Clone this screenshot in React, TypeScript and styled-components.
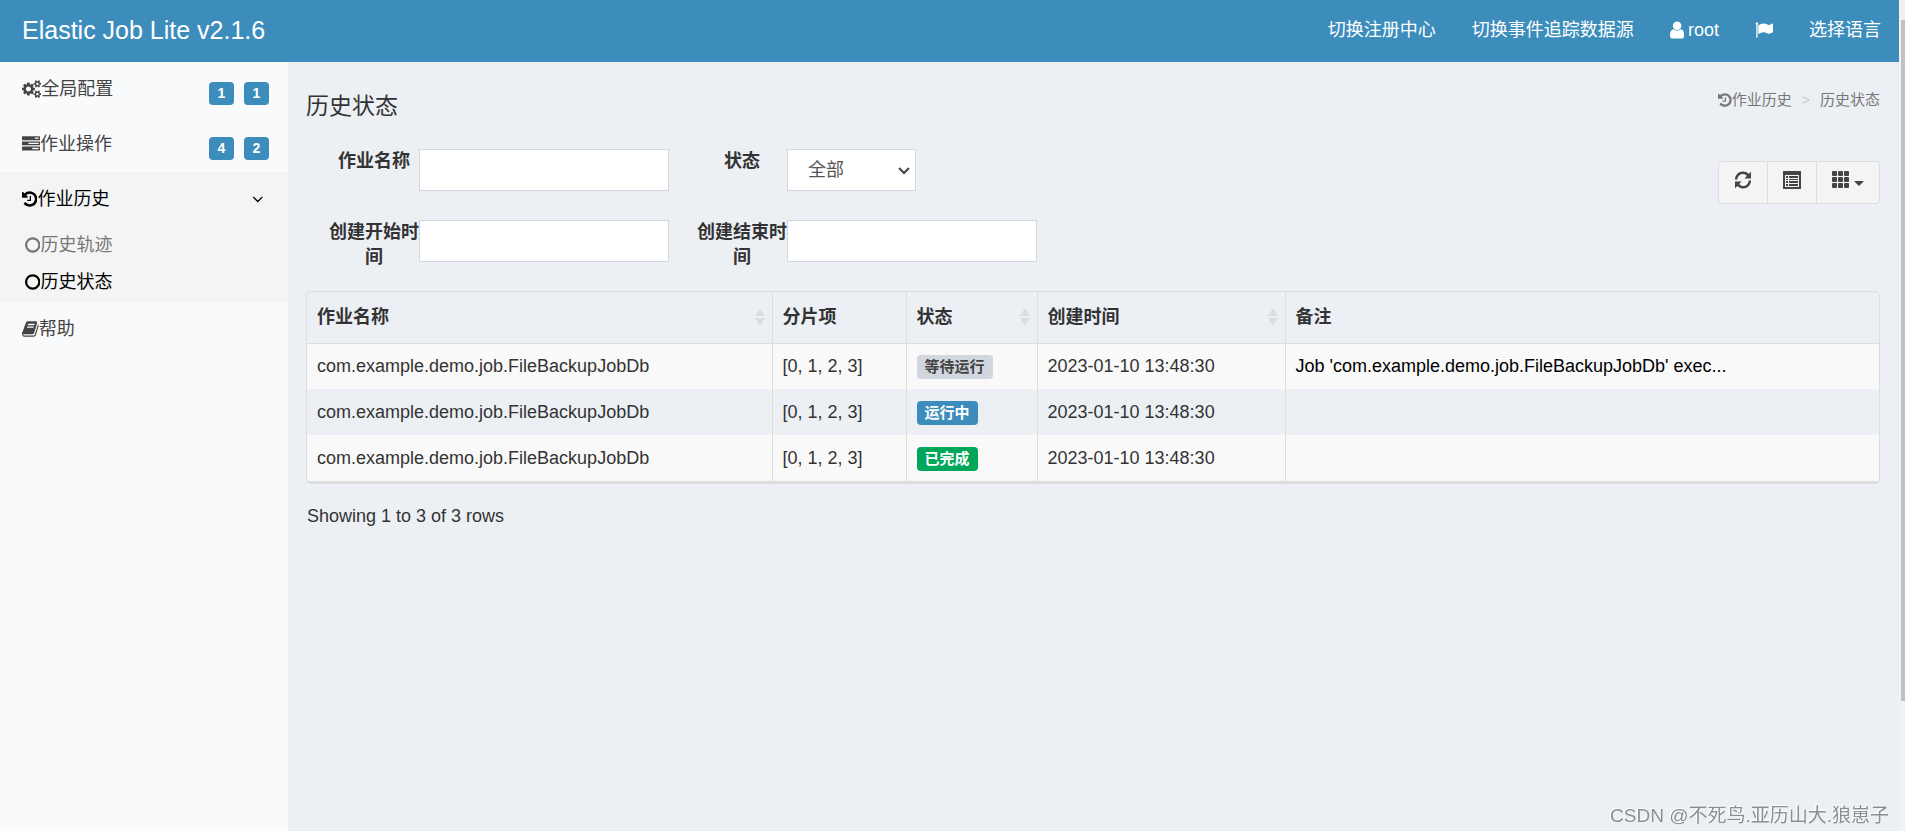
import React from "react";
import styled, { createGlobalStyle, css } from "styled-components";

const GlobalStyle = createGlobalStyle`
  *, *::before, *::after { box-sizing: border-box; }
  html, body { margin: 0; padding: 0; }
  body {
    background: #ffffff;
    color: #333333;
    font-family: "Liberation Sans", "Noto Sans CJK SC", sans-serif;
    font-size: 18px;
    line-height: 25px;
  }
  a { color: inherit; text-decoration: none; }
  button, input, select { font-family: inherit; font-size: inherit; }
  ul, ol { list-style: none; margin: 0; padding: 0; }
`;

/* ---------- icons ---------- */

const Glyph = styled.svg<{ $h?: number }>`
  height: ${(p) => p.$h ?? 18}px;
  width: auto;
  flex: none;
  display: block;
  fill: currentColor;
  fill-rule: evenodd;
`;

const smallCog = (dy: number) =>
  `M1920 ${198 + dy}v-140q0 -16 -149 -31q-12 -27 -30 -52q51 -113 51 -138q0 -4 -4 -7q-122 -71 -124 -71q-8 0 -46 47t-52 68q-20 -2 -30 -2t-30 2q-14 -21 -52 -68t-46 -47q-2 0 -124 71q-4 3 -4 7q0 25 51 138q-18 25 -30 52q-149 15 -149 31v140q0 16 149 31q13 29 30 52q-51 113 -51 138q0 4 4 7q4 2 35 20t59 34t30 16q8 0 46 -46.5t52 -67.5q20 2 30 2t30 -2q51 71 92 112l6 2q4 0 124 -70q4 -3 4 -7q0 -25 -51 -138q17 -23 30 -52q149 -15 149 -31z`;

const ICONS = {
  cogs: {
    w: 1920,
    d:
      "M896 640q0 106 -75 181t-181 75t-181 -75t-75 -181t75 -181t181 -75t181 75t75 181zM1664 128q0 52 -38 90t-90 38t-90 -38t-38 -90q0 -53 37.5 -90.5t90.5 -37.5t90.5 37.5t37.5 90.5zM1664 1152q0 52 -38 90t-90 38t-90 -38t-38 -90q0 -53 37.5 -90.5t90.5 -37.5t90.5 37.5t37.5 90.5zM1280 731v-185q0 -10 -7 -19.5t-16 -10.5l-155 -24q-11 -35 -32 -76q34 -48 90 -115q7 -11 7 -20q0 -12 -7 -19q-23 -30 -82.5 -89.5t-78.5 -59.5q-11 0 -21 7l-115 90q-37 -19 -77 -31q-11 -108 -23 -155q-7 -24 -30 -24h-186q-11 0 -20 7.5t-10 17.5l-23 153q-34 10 -75 31l-118 -89q-7 -7 -20 -7q-11 0 -21 8q-144 133 -144 160q0 9 7 19q10 14 41 53t47 61q-23 44 -35 82l-152 24q-10 1 -17 9.5t-7 19.5v185q0 10 7 19.5t16 10.5l155 24q11 35 32 76q-34 48 -90 115q-7 11 -7 20q0 12 7 20q22 30 82 89t79 59q11 0 21 -7l115 -90q34 18 77 32q11 108 23 154q7 24 30 24h186q11 0 20 -7.5t10 -17.5l23 -153q34 -10 75 -31l118 89q8 7 20 7q11 0 21 -8q144 -133 144 -160q0 -8 -7 -19q-12 -16 -42 -54t-45 -60q23 -48 34 -82l152 -23q10 -2 17 -10.5t7 -19.5z" +
      smallCog(0) +
      smallCog(1024),
  },
  tasks: {
    w: 1792,
    d: "M1024 128h640v128h-640v-128zM640 640h1024v128h-1024v-128zM1280 1152h384v128h-384v-128zM1792 320v-256q0 -26 -19 -45t-45 -19h-1664q-26 0 -45 19t-19 45v256q0 26 19 45t45 19h1664q26 0 45 -19t19 -45zM1792 832v-256q0 -26 -19 -45t-45 -19h-1664q-26 0 -45 19t-19 45v256q0 26 19 45t45 19h1664q26 0 45 -19t19 -45zM1792 1344v-256q0 -26 -19 -45t-45 -19h-1664q-26 0 -45 19t-19 45v256q0 26 19 45t45 19h1664q26 0 45 -19t19 -45z",
  },
  history: {
    w: 1536,
    d: "M1536 640q0 -156 -61 -298t-164 -245t-245 -164t-298 -61q-172 0 -327 72.5t-264 204.5q-7 10 -6.5 22.5t8.5 20.5l137 138q10 9 25 9q16 -2 23 -12q73 -95 179 -147t225 -52q104 0 198.5 40.5t163.5 109.5t109.5 163.5t40.5 198.5t-40.5 198.5t-109.5 163.5t-163.5 109.5t-198.5 40.5q-98 0 -188 -35.5t-160 -101.5l137 -138q31 -30 14 -69q-17 -40 -59 -40h-448q-26 0 -45 19t-19 45v448q0 42 40 59q39 17 69 -14l130 -129q107 101 244.5 156.5t284.5 55.5q156 0 298 -61t245 -164t164 -245t61 -298zM896 928v-448q0 -14 -9 -23t-23 -9h-320q-14 0 -23 9t-9 23v64q0 14 9 23t23 9h224v352q0 14 9 23t23 9h64q14 0 23 -9t9 -23z",
  },
  circle: {
    w: 1536,
    d: "M768 1184q-148 0 -273 -73t-198 -198t-73 -273t73 -273t198 -198t273 -73t273 73t198 198t73 273t-73 273t-198 198t-273 73zM1536 640q0 -209 -103 -385.5t-279.5 -279.5t-385.5 -103t-385.5 103t-279.5 279.5t-103 385.5t103 385.5t279.5 279.5t385.5 103t385.5 -103t279.5 -279.5t103 -385.5z",
  },
  book: {
    w: 1664,
    d: "M1639 1058q40 -57 18 -129l-275 -906q-19 -64 -76.5 -107.5t-122.5 -43.5h-923q-77 0 -148.5 53.5t-99.5 131.5q-24 67 -2 127q0 4 3 27t4 37q1 8 -3 21.5t-3 19.5q2 11 8 21t16.5 23.5t16.5 23.5q23 38 45 91.5t30 91.5q3 10 0.5 30t-0.5 28q3 11 17 28t17 23q21 36 42 92t25 90q1 9 -2.5 32t0.5 28q4 13 22 30.5t22 22.5q19 26 42.5 84.5t27.5 96.5q1 8 -3 25.5t-2 26.5q2 8 9 18t18 23t17 21q8 12 16.5 30.5t15 35t16 36t19.5 32t26.5 23.5t36 11.5t47.5 -5.5l-1 -3q38 9 51 9h761q74 0 114 -56t18 -130l-274 -906q-36 -119 -71.5 -153.5t-128.5 -34.5h-869q-27 0 -38 -15q-11 -16 -1 -43q24 -70 144 -70h923q29 0 56 15.5t35 41.5l300 987q7 22 5 57q38 -15 59 -43zM575 1056q-4 -13 2 -22.5t20 -9.5h608q13 0 25.5 9.5t16.5 22.5l21 64q4 13 -2 22.5t-20 9.5h-608q-13 0 -25.5 -9.5t-16.5 -22.5zM492 800q-4 -13 2 -22.5t20 -9.5h608q13 0 25.5 9.5t16.5 22.5l21 64q4 13 -2 22.5t-20 9.5h-608q-13 0 -25.5 -9.5t-16.5 -22.5z",
  },
  user: {
    w: 1280,
    d: "M1280 137q0 -109 -62.5 -187t-150.5 -78h-854q-88 0 -150.5 78t-62.5 187q0 85 8.5 160.5t31.5 152t58.5 131t94 89t134.5 34.5q131 -128 313 -128t313 128q76 0 134.5 -34.5t94 -89t58.5 -131t31.5 -152t8.5 -160.5zM1024 1024q0 -159 -112.5 -271.5t-271.5 -112.5t-271.5 112.5t-112.5 271.5t112.5 271.5t271.5 112.5t271.5 -112.5t112.5 -271.5z",
  },
  flag: {
    w: 1792,
    d: "M320 1280q0 -72 -64 -110v-1266q0 -13 -9.5 -22.5t-22.5 -9.5h-64q-13 0 -22.5 9.5t-9.5 22.5v1266q-64 38 -64 110q0 53 37.5 90.5t90.5 37.5t90.5 -37.5t37.5 -90.5zM1792 1216v-763q0 -25 -12.5 -38.5t-39.5 -27.5q-215 -116 -369 -116q-61 0 -123.5 22t-108.5 48t-115.5 48t-142.5 22q-192 0 -464 -146q-17 -9 -33 -9q-26 0 -45 19t-19 45v742q0 32 31 55q21 14 79 43q236 120 421 120q107 0 200 -29t219 -88q38 -19 88 -19q54 0 117.5 21t110 47t88 47t54.5 21q26 0 45 -19t19 -45z",
  },
  down: {
    w: 1152,
    d: "M1075 800q0 -13 -10 -23l-466 -466q-10 -10 -23 -10t-23 10l-466 466q-10 10 -10 23t10 23l50 50q10 10 23 10t23 -10l393 -393l393 393q10 10 23 10t23 -10l50 -50q10 -10 10 -23z",
  },
};

type IconName = keyof typeof ICONS;

const Icon = ({ name, h }: { name: IconName; h?: number }) => (
  <Glyph $h={h} viewBox={`0 0 ${ICONS[name].w} 1792`} aria-hidden="true">
    <path transform="translate(0 1536) scale(1 -1)" d={ICONS[name].d} />
  </Glyph>
);

const RefreshIcon = () => (
  <Glyph viewBox="0 0 18 18" aria-hidden="true">
    <path d="M1 8.600C1 4 4.600 .6 9 .6c2.200 0 4.200 .8 5.600 2.300L17 .8v6.700h-6.600l2.400-2.600C11.800 3.700 10.500 3 9 3 5.900 3 3.500 5.300 3.300 8.600z" />
    <path d="M17 9.400c0 4.600-3.600 8-8 8-2.200 0-4.200-.8-5.600-2.300L1 17.200v-6.700h6.600l-2.400 2.600c1 1.200 2.300 1.900 3.800 1.900 3.100 0 5.500-2.300 5.700-5.600z" />
  </Glyph>
);

const ListIcon = () => (
  <Glyph viewBox="0 0 18 18" aria-hidden="true">
    <path d="M0 0h18v18H0zM2 4v12h14V4z" />
    <path d="M3 5h2v2H3zM6 5h9v2H6zM3 8h2v1H3zM6 8h9v1H6zM3 10h2v2H3zM6 10h9v2H6zM3 13h2v2H3zM6 13h9v2H6z" />
  </Glyph>
);

const GridIcon = () => (
  <Glyph viewBox="0 0 18 18" aria-hidden="true">
    {[0, 6, 12].map((y) =>
      [0, 6, 12].map((x) => <rect key={`${x}-${y}`} x={x} y={y} width="5" height="5" rx="1" />)
    )}
  </Glyph>
);

/* ---------- page frame ---------- */

const Page = styled.div`
  display: flex;
  height: 100vh;
  overflow: hidden;
  padding-bottom: 4px;
`;

const Main = styled.div`
  flex: 1;
  min-width: 0;
  display: flex;
  flex-direction: column;
`;

const ScrollTrack = styled.div`
  flex: none;
  width: 6px;
  padding: 20px 0 0 2px;
  background: #f1f1f1;
`;

const ScrollThumb = styled.div`
  height: 84%;
  background: #c1c1c1;
`;

const Header = styled.header`
  display: flex;
  align-items: center;
  justify-content: space-between;
  height: 62px;
  padding: 0 18px 2px 22px;
  background: #3c8dbc;
  color: #ffffff;
`;

const Brand = styled.a`
  font-size: 25px;
  line-height: 60px;
`;

const TopNav = styled.nav`
  display: flex;
  gap: 36px;
`;

const TopLink = styled.a`
  display: flex;
  align-items: center;
  gap: 4px;
`;

const Body = styled.div`
  flex: 1;
  display: flex;
`;

/* ---------- sidebar ---------- */

const Sidebar = styled.aside`
  flex: none;
  width: 288px;
  background: #f9fafc;

  ${Glyph} { margin-bottom: 2px; }
`;

const MenuItem = styled.li<{ $active?: boolean }>`
  background: ${(p) => (p.$active ? "#f4f4f5" : "transparent")};
`;

const MenuLink = styled.a<{ $active?: boolean }>`
  display: flex;
  align-items: center;
  height: 55px;
  padding: 0 19px 0 22px;
  color: ${(p) => (p.$active ? "#000000" : "#444444")};
`;

const Badges = styled.span`
  display: flex;
  gap: 10px;
  margin-left: auto;
  padding-top: 8px;
`;

const Chevron = styled.span`
  margin: 0 5px 0 auto;
`;

const labelBase = css`
  display: inline-block;
  border-radius: 4px;
  font-weight: bold;
  text-align: center;
`;

const CountBadge = styled.span`
  ${labelBase}
  min-width: 25px;
  height: 23px;
  font-size: 14px;
  line-height: 23px;
  background: #3c8dbc;
  color: #ffffff;
`;

const SubMenu = styled.ul`
  padding-bottom: 1px;
`;

const SubLink = styled.a<{ $active?: boolean }>`
  display: flex;
  align-items: center;
  height: 37px;
  padding-left: 25px;
  color: ${(p) => (p.$active ? "#000000" : "#777777")};
`;

/* ---------- content ---------- */

const Content = styled.main`
  flex: 1;
  min-width: 0;
  padding: 0 19px 0 18px;
  background: #ecf0f5;
`;

const TitleRow = styled.div`
  display: flex;
  justify-content: space-between;
  align-items: flex-start;
  padding-top: 24px;
`;

const Title = styled.h1`
  margin: 0;
  font-size: 23px;
  line-height: 40px;
  font-weight: normal;
`;

const Crumbs = styled.ol`
  display: flex;
  color: #777777;
  font-size: 15px;
  line-height: 28px;
`;

const Crumb = styled.li`
  & + &::before {
    content: ">";
    padding: 0 10px;
    color: #cccccc;
    font-size: 14px;
  }
`;

const CrumbLink = styled.a`
  display: inline-flex;
  align-items: center;
`;

const FilterRow = styled.div`
  display: flex;
  justify-content: space-between;
  align-items: flex-start;
  margin-top: 23px;
`;

const Filters = styled.form`
  display: grid;
  grid-template-columns: 353px 353px;
  column-gap: 15px;
  row-gap: 29px;
  padding-left: 10px;
`;

const Field = styled.div`
  display: flex;
`;

const FieldLabel = styled.label`
  width: 103px;
  padding-left: 13px;
  font-weight: bold;
  text-align: center;
  word-break: break-all;
`;

const control = css`
  height: 42px;
  border: 1px solid #d2d6de;
  border-radius: 0;
  background: #ffffff;
  color: #555555;
`;

const TextBox = styled.input`
  ${control}
  width: 250px;
  padding: 0 15px;
`;

const SelectWrap = styled.span`
  position: relative;
  display: block;
  width: 129px;
  height: 42px;
`;

const Select = styled.select`
  ${control}
  width: 100%;
  padding: 0 20px;
  appearance: none;
`;

const SelectArrow = styled.svg`
  position: absolute;
  right: 6px;
  top: 18px;
  width: 12px;
  height: 8px;
  fill: none;
  stroke: #444444;
  stroke-width: 2;
  pointer-events: none;
`;

const Toolbar = styled.div`
  display: flex;
  margin-top: 12px;
`;

const ToolButton = styled.button`
  display: flex;
  justify-content: center;
  align-items: flex-start;
  gap: 4px;
  height: 43px;
  padding: 9px 15px 0;
  border: 1px solid #dddddd;
  background: #f4f4f4;
  color: #444444;
  & + & { margin-left: -1px; }
  &:first-child { border-radius: 4px 0 0 4px; }
  &:last-child { border-radius: 0 4px 4px 0; }
`;

const Caret = styled.span`
  margin-top: 10px;
  border: 5px solid transparent;
  border-top-color: currentColor;
  border-bottom: 0;
`;

/* ---------- table ---------- */

const TableBox = styled.div`
  margin-top: 21px;
  border: 1px solid #dddddd;
  border-bottom-width: 3px;
  border-radius: 5px;
  overflow: hidden;
`;

const Table = styled.table`
  width: 100%;
  table-layout: fixed;
  border-collapse: collapse;
`;

const Col = styled.col<{ $w?: number }>`
  width: ${(p) => (p.$w ? `${p.$w}px` : "auto")};
`;

const HeadCell = styled.th`
  height: 51px;
  padding: 0 10px;
  border-bottom: 1px solid #dddddd;
  text-align: left;
  & + & { border-left: 1px solid #dddddd; }
`;

const HeadInner = styled.div`
  display: flex;
  align-items: center;
  justify-content: space-between;
  margin-right: -4px;
`;

const SortMark = styled.svg`
  width: 12px;
  height: 20px;
  fill: #dddddd;
`;

const Row = styled.tr`
  background: #ecf0f5;
  &:nth-child(odd) { background: #f9f9f9; }
`;

const Cell = styled.td<{ $dark?: boolean }>`
  height: 46px;
  padding: 0 10px;
  color: ${(p) => (p.$dark ? "#000000" : "inherit")};
  white-space: nowrap;
  & + & { border-left: 1px solid #dddddd; }
`;

type Tone = "wait" | "run" | "done";

const tones: Record<Tone, string> = {
  wait: "background: #d2d6de; color: #444444;",
  run: "background: #3c8dbc; color: #ffffff;",
  done: "background: #00a65a; color: #ffffff;",
};

const StatusLabel = styled.span<{ $tone: Tone }>`
  ${labelBase}
  height: 24px;
  padding: 0 8px;
  font-size: 15px;
  line-height: 24px;
  vertical-align: middle;
  ${(p) => tones[p.$tone]}
`;

const Summary = styled.p`
  margin: 20px 0 0 1px;
`;

const Watermark = styled.div`
  position: fixed;
  right: 16px;
  bottom: 4px;
  font-size: 19px;
  line-height: 30px;
  color: #8c8e92;
  text-shadow: -1px -1px 0 #ffffff;
`;

const columns: { label: string; width?: number; sortable?: boolean }[] = [
  { label: "作业名称", width: 465, sortable: true },
  { label: "分片项", width: 134 },
  { label: "状态", width: 131, sortable: true },
  { label: "创建时间", width: 248, sortable: true },
  { label: "备注" },
];

const rows: { status: string; tone: Tone; note: string }[] = [
  { status: "等待运行", tone: "wait", note: "Job 'com.example.demo.job.FileBackupJobDb' exec..." },
  { status: "运行中", tone: "run", note: "" },
  { status: "已完成", tone: "done", note: "" },
];

export default function App() {
  return (
    <>
      <GlobalStyle />
      <Page>
        <Main>
          <Header>
            <Brand href="#">Elastic Job Lite v2.1.6</Brand>
            <TopNav>
              <TopLink href="#">切换注册中心</TopLink>
              <TopLink href="#">切换事件追踪数据源</TopLink>
              <TopLink href="#"><Icon name="user" h={20} />root</TopLink>
              <TopLink href="#" aria-label="flag"><Icon name="flag" /></TopLink>
              <TopLink href="#">选择语言</TopLink>
            </TopNav>
          </Header>
          <Body>
            <Sidebar>
              <ul>
                <MenuItem>
                  <MenuLink href="#">
                    <Icon name="cogs" />全局配置
                    <Badges><CountBadge>1</CountBadge><CountBadge>1</CountBadge></Badges>
                  </MenuLink>
                </MenuItem>
                <MenuItem>
                  <MenuLink href="#">
                    <Icon name="tasks" />作业操作
                    <Badges><CountBadge>4</CountBadge><CountBadge>2</CountBadge></Badges>
                  </MenuLink>
                </MenuItem>
                <MenuItem $active>
                  <MenuLink href="#" $active>
                    <Icon name="history" />作业历史
                    <Chevron><Icon name="down" /></Chevron>
                  </MenuLink>
                  <SubMenu>
                    <li><SubLink href="#"><Icon name="circle" />历史轨迹</SubLink></li>
                    <li><SubLink href="#" $active><Icon name="circle" />历史状态</SubLink></li>
                  </SubMenu>
                </MenuItem>
                <MenuItem>
                  <MenuLink href="#"><Icon name="book" />帮助</MenuLink>
                </MenuItem>
              </ul>
            </Sidebar>
            <Content>
              <TitleRow>
                <Title>历史状态</Title>
                <Crumbs>
                  <Crumb><CrumbLink href="#"><Icon name="history" h={16} />作业历史</CrumbLink></Crumb>
                  <Crumb>历史状态</Crumb>
                </Crumbs>
              </TitleRow>
              <FilterRow>
                <Filters>
                  <Field>
                    <FieldLabel htmlFor="job-name">作业名称</FieldLabel>
                    <TextBox id="job-name" type="text" />
                  </Field>
                  <Field>
                    <FieldLabel htmlFor="state">状态</FieldLabel>
                    <SelectWrap>
                      <Select id="state"><option>全部</option></Select>
                      <SelectArrow viewBox="0 0 12 8"><path d="M1 1l5 5 5-5" /></SelectArrow>
                    </SelectWrap>
                  </Field>
                  <Field>
                    <FieldLabel htmlFor="start">创建开始时间</FieldLabel>
                    <TextBox id="start" type="text" />
                  </Field>
                  <Field>
                    <FieldLabel htmlFor="end">创建结束时间</FieldLabel>
                    <TextBox id="end" type="text" />
                  </Field>
                </Filters>
                <Toolbar>
                  <ToolButton type="button" aria-label="Refresh"><RefreshIcon /></ToolButton>
                  <ToolButton type="button" aria-label="Toggle"><ListIcon /></ToolButton>
                  <ToolButton type="button" aria-label="Columns"><GridIcon /><Caret /></ToolButton>
                </Toolbar>
              </FilterRow>
              <TableBox>
                <Table>
                  <colgroup>
                    {columns.map((c) => <Col key={c.label} $w={c.width} />)}
                  </colgroup>
                  <thead>
                    <tr>
                      {columns.map((c) => (
                        <HeadCell key={c.label}>
                          <HeadInner>
                            {c.label}
                            {c.sortable && (
                              <SortMark viewBox="0 0 12 20"><path d="M6 1l5 8H1zM6 19l5-8H1z" /></SortMark>
                            )}
                          </HeadInner>
                        </HeadCell>
                      ))}
                    </tr>
                  </thead>
                  <tbody>
                    {rows.map((r) => (
                      <Row key={r.status}>
                        <Cell>com.example.demo.job.FileBackupJobDb</Cell>
                        <Cell>[0, 1, 2, 3]</Cell>
                        <Cell><StatusLabel $tone={r.tone}>{r.status}</StatusLabel></Cell>
                        <Cell>2023-01-10 13:48:30</Cell>
                        <Cell $dark>{r.note}</Cell>
                      </Row>
                    ))}
                  </tbody>
                </Table>
              </TableBox>
              <Summary>Showing 1 to 3 of 3 rows</Summary>
            </Content>
          </Body>
        </Main>
        <ScrollTrack><ScrollThumb /></ScrollTrack>
      </Page>
      <Watermark>CSDN @不死鸟.亚历山大.狼崽子</Watermark>
    </>
  );
}
